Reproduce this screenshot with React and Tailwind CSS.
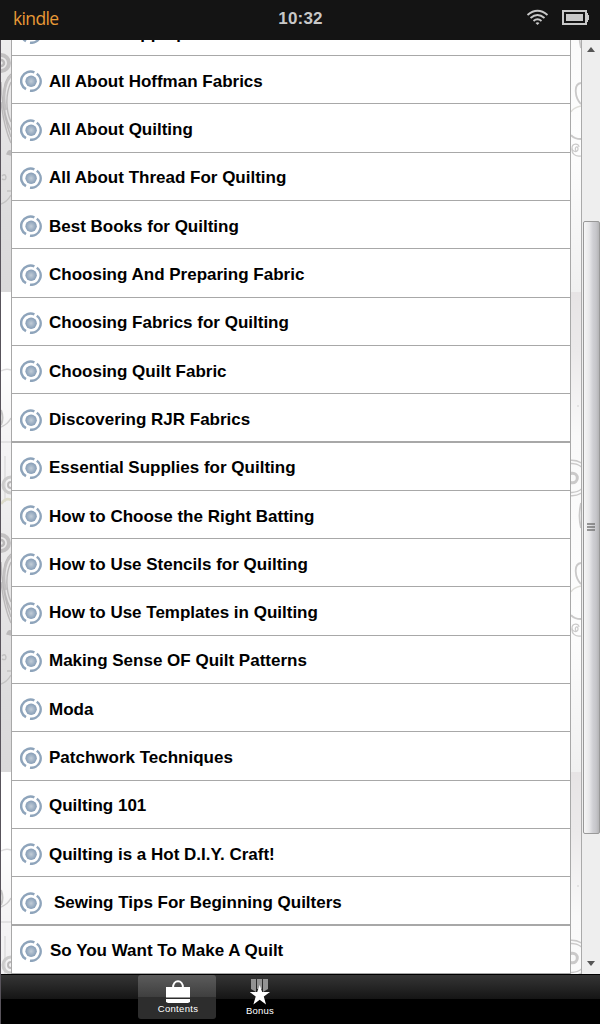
const rows = [
  ["All About Hoffman Fabrics", "h-[48px]", "mt-[16px]"],
  ["All About Quilting", "h-[49px]", "mt-[16px]"],
  ["All About Thread For Quilting", "h-[48px]", "mt-[15px]"],
  ["Best Books for Quilting", "h-[48px]", "mt-[16px]"],
  ["Choosing And Preparing Fabric", "h-[49px]", "mt-[16px]"],
  ["Choosing Fabrics for Quilting", "h-[48px]", "mt-[15px]"],
  ["Choosing Quilt Fabric", "h-[48px]", "mt-[16px]"],
  ["Discovering RJR Fabrics", "h-[49px] border-b-2", "mt-[16px]"],
  ["Essential Supplies for Quilting", "h-[48px]", "mt-[15px]"],
  ["How to Choose the Right Batting", "h-[48px]", "mt-[16px]"],
  ["How to Use Stencils for Quilting", "h-[48px]", "mt-[16px]"],
  ["How to Use Templates in Quilting", "h-[49px]", "mt-[16px]"],
  ["Making Sense OF Quilt Patterns", "h-[48px]", "mt-[15px]"],
  ["Moda", "h-[48px]", "mt-[16px]"],
  ["Patchwork Techniques", "h-[49px]", "mt-[16px]"],
  ["Quilting 101", "h-[48px]", "mt-[15px]"],
  ["Quilting is a Hot D.I.Y. Craft!", "h-[48px]", "mt-[16px]"],
  ["Sewing Tips For Beginning Quilters", "h-[49px] border-b-2", "mt-[16px] pl-[5px]"],
  ["So You Want To Make A Quilt", "h-[48px]", "mt-[15px] pl-px"],
];

function Bullet({ className = "" }) {
  return (
    <svg className={`size-[22px] shrink-0 ${className}`} viewBox="0 0 22 22" fill="none">
      <circle cx="11.1" cy="11.3" r="5.7" fill="url(#dot)" />
      <path d="M14.4 2.4A9.4 9.4 0 0 0 6 19.2M16.8 3.8A9.4 9.4 0 0 1 10 20.7" stroke="#8ea4bb" strokeWidth="2.5" />
    </svg>
  );
}

function LeftStrip() {
  return (
    <svg className="h-[934px] w-[10px] shrink-0" viewBox="0 0 10 934">
      <defs>
        <linearGradient id="lg" x2="0" y2="1">
          <stop offset="0" stopColor="#fff" /><stop offset=".14" stopColor="#fff" />
          <stop offset=".3" stopColor="#f5f4f5" /><stop offset=".45" stopColor="#efeeef" />
          <stop offset=".62" stopColor="#e6e5e6" /><stop offset=".85" stopColor="#dddcdd" /><stop offset="1" stopColor="#dad9da" />
        </linearGradient>
        <pattern id="lp" x="0" y="252" width="10" height="480" patternUnits="userSpaceOnUse">
          <rect width="10" height="480" fill="url(#lg)" />
          <g fill="none" stroke="#bbb9ba" strokeWidth="1.4">
            <path d="M0 79Q5 76 10 78M0 150H10M4 164V210" stroke="#dddcdd" />
            <path d="M0 135Q7 132 10 126" stroke="#cfcecf" />
            <path d="M0 118Q3 126 0 133" stroke="#c4c3c3" strokeWidth="2" />
            <path d="M0 212Q5 205 10 208" stroke="#dedccb" strokeWidth="2.5" />
            <circle cx="10" cy="193" r="8" stroke="#cccbcb" strokeWidth="3" /><circle cx="10" cy="193" r="3" strokeWidth="2" />
            <circle cx="0" cy="251" r="8" stroke="#c2c0c1" strokeWidth="4" /><circle cx="0" cy="251" r="3" strokeWidth="2.5" />
            <path d="M10 262C0 270 0 298 10 318M10 270C4 283 5 299 10 310M0 270Q1 301 10 325M0 290Q3 315 10 331" />
            <path d="M10 264C2 272 2 290 5 298" strokeWidth="2.5" stroke="#c3c1c2" />
            <path d="M6 342Q7 338 10 339V343Z" fill="#bbb9ba" />
            <path d="M1 367Q5 369 5 365Q4 361 1 364M0 392Q6 390 10 383M6 379H10" stroke="#c3c2c2" />
          </g>
        </pattern>
      </defs>
      <rect width="10" height="934" fill="url(#lp)" />
    </svg>
  );
}

function RightStrip() {
  return (
    <svg className="h-[934px] w-[10px] shrink-0" viewBox="0 0 10 934">
      <defs>
        <linearGradient id="rg" x2="0" y2="1">
          <stop offset="0" stopColor="#e7e4e5" /><stop offset=".12" stopColor="#ebe9ea" />
          <stop offset=".3" stopColor="#f9f9f9" /><stop offset=".7" stopColor="#fdfdfd" /><stop offset="1" stopColor="#f0f0f0" />
        </linearGradient>
        <pattern id="rp" x="0" y="252" width="10" height="480" patternUnits="userSpaceOnUse">
          <rect width="10" height="480" fill="url(#rg)" />
          <circle cx="7" cy="114" r=".8" fill="#ccc" />
          <g fill="none" stroke="#cac9c9" strokeWidth="1.4">
            <circle cx="1.5" cy="186" r="4.8" strokeWidth="3" />
            <circle cx="1" cy="186" r="14.5" /><circle cx="1" cy="186" r="17.7" />
            <path d="M10 211Q7 224 10 236M10 271C2 272 4 286 10 292" strokeWidth="1.8" />
            <path d="M10 294Q2 296 0 300" stroke="#deddd8" /><path d="M0 323Q3 327 10 327" strokeWidth="2" />
            <path d="M5 339C3 335 7 333 7 337C7 341 1 340 1 336C1 331 8 331 8 335M1 336C0 342 5 345 10 344" strokeWidth="1.2" />
          </g>
        </pattern>
      </defs>
      <rect width="10" height="934" fill="url(#rp)" />
    </svg>
  );
}

export default function App() {
  return (
    <div className="flex h-[1024px] w-[600px] flex-col overflow-hidden bg-black font-['Liberation_Sans',sans-serif]">
      <header className="grid h-[40px] shrink-0 grid-cols-3 items-center bg-[#141414] pr-[11px] pl-[12px]">
        <span className="pb-[3px] pl-px font-['Open_Sans',sans-serif] text-[17.5px] tracking-[-0.65px] text-[#e99a37]">kindle</span>
        <span className="pb-[3px] text-center text-[17px] font-bold tracking-[0.2px] text-[#c8c8c8]">10:32</span>
        <div className="flex items-center justify-end gap-[13px] pb-[6px]">
          <svg className="h-[17px] w-[23px]" viewBox="0 0 23 17" fill="none" stroke="#c9c9c9" strokeWidth="1.9">
            <path d="M1.5 6Q11.5-2.4 21.5 6M4.5 9Q11.5 3 18.5 9M7.5 12Q11.5 8.5 15.5 12" />
            <path d="M9.5 14L11.5 16L13.5 14Q11.5 12.5 9.5 14Z" fill="#c9c9c9" stroke="none" />
          </svg>
          <svg className="h-[15px] w-[27px]" viewBox="0 0 27 15">
            <rect x="1" y="1" width="23" height="13" fill="none" stroke="#c9c9c9" strokeWidth="2" />
            <path d="M4 4H21V11H4ZM24 3H26V5H27V10H26V12H24Z" fill="#c9c9c9" />
          </svg>
        </div>
      </header>
      <main className="flex h-[934px] shrink-0 border-l border-[#58535b] bg-white">
        <LeftStrip />
        <div className="flex w-[560px] shrink-0 flex-col overflow-hidden border-x border-[#a8a8a8] bg-white">
          <svg className="h-0 w-0 shrink-0"><defs><radialGradient id="dot"><stop stopColor="#c1ccd7" /><stop offset="1" stopColor="#869db6" /></radialGradient></defs></svg>
          <div className="flex h-[16px] shrink-0 items-end gap-[7px] overflow-hidden border-b border-[#a8a8a8] pb-[11px] pl-[8px]">
            <Bullet /><span className="text-[17px] leading-[20px] font-bold">All About Appliqué</span>
          </div>
          {rows.map(([text, height, label]) => (
            <div key={text} className={`flex shrink-0 items-start gap-[7px] border-b border-[#a8a8a8] pl-[8px] ${height}`}>
              <Bullet className={height.startsWith("h-[49px]") ? "mt-[15px]" : "mt-[14px]"} />
              <span className={`text-[17px] leading-[20px] font-bold whitespace-nowrap ${label}`}>{text}</span>
            </div>
          ))}
        </div>
        <RightStrip />
        <div className="flex w-[19px] shrink-0 flex-col items-center border-l border-[#aaa] bg-[#eee]">
          <div className="flex h-[181px] w-full items-start justify-center pt-[7px]">
            <svg className="h-[5px] w-[8px]" viewBox="0 0 8 5"><path d="M0 5L4 0L8 5Z" fill="#555" /></svg>
          </div>
          <div className="flex h-[613px] w-[17px] items-center justify-center rounded-[2px] border border-[#999] bg-[linear-gradient(90deg,#f6f6f6,#e8e8ea_35%,#cfcfd3_60%,#c6c6ca_80%,#b4b4b6)]">
            <svg className="h-[9px] w-[8px]" viewBox="0 0 8 9"><path d="M0 1H8M0 4H8M0 7H8" stroke="#777" strokeWidth="1.6" /></svg>
          </div>
          <div className="flex w-full grow items-end justify-center pb-[8px]">
            <svg className="h-[5px] w-[8px]" viewBox="0 0 8 5"><path d="M0 0H8L4 5Z" fill="#555" /></svg>
          </div>
        </div>
      </main>
      <footer className="flex h-[50px] border-l border-[#58535b] bg-[linear-gradient(#000_0px,#000_1px,#353535_1px,#151515_25px,#000_25px)] pt-px pl-[137px] text-[9.5px] leading-[11px] text-white">
        <div className="flex h-[44px] w-[78px] flex-col items-center rounded-[3px] bg-[linear-gradient(#5b5b5b,#3f3f3f_22px,#2d2d2d_22px)] pt-[5px]">
          <svg className="ml-px h-[23px] w-[26px]" viewBox="0 0 26 23" fill="#fff">
            <path d="M8 8C8-1 18-1 18 8" fill="none" stroke="#fff" strokeWidth="2" />
            <path d="M1 7H25V17.5H1ZM1 19H25V22L23 23H3L1 22Z" />
          </svg>
          <span className="pl-[2px] tracking-[0.3px]">Contents</span>
        </div>
        <div className="ml-[5px] flex w-[78px] flex-col items-center pt-[4px]">
          <svg className="h-[26px] w-[20px]" viewBox="0 0 20 26">
            <path d="M1 0H6V13L1 10ZM7 0H12V10H7ZM13 0H18V10L13 13Z" fill="#939393" />
            <path d="M9.7 6L12.2 13H20L13.8 17.6L16 25.5L9.7 20.8L3.4 25.5L5.7 17.6L-.5 13H7.2Z" fill="#fff" />
          </svg>
          <span className="tracking-[0.2px]">Bonus</span>
        </div>
      </footer>
    </div>
  );
}
